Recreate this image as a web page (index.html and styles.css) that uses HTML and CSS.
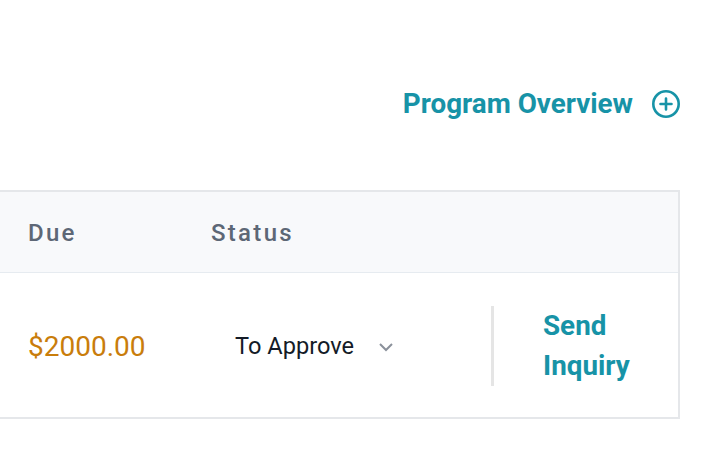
FILE: index.html
```html
<!DOCTYPE html>
<html lang="en">
<head>
<meta charset="utf-8">
<link rel="stylesheet" href="styles.css">
</head>
<body>
<div class="page">
  <div class="top">
    <a class="overview" href="#">Program Overview
      <svg class="plus" width="30" height="30" viewBox="0 0 30 30" aria-hidden="true">
        <circle cx="15" cy="15" r="12.7" fill="none" stroke="currentColor" stroke-width="2.6"/>
        <path d="M15 9.5v11M9.5 15h11" stroke="currentColor" stroke-width="2.6" stroke-linecap="round"/>
      </svg>
    </a>
  </div>
  <div class="table">
    <div class="row head">
      <div class="cell c-due">Due</div>
      <div class="cell c-status">Status</div>
      <div class="cell c-act"></div>
    </div>
    <div class="row body">
      <div class="cell c-due amount">$2000.00</div>
      <div class="cell c-status">
        <div class="select">To Approve
          <svg class="chev" width="16" height="10" viewBox="0 0 16 10" aria-hidden="true"><path d="M2 2l6 6 6-6" fill="none" stroke="currentColor" stroke-width="2"/></svg>
        </div>
      </div>
      <div class="cell c-act">
        <span class="divider"></span>
        <a class="inquiry" href="#">Send<br>Inquiry</a>
      </div>
    </div>
  </div>
</div>
</body>
</html>
```
FILE: styles.css
```css
* { box-sizing: border-box; }
html, body { margin: 0; background: #fff; }
body { font-family: Roboto, "Noto Sans", sans-serif; }
.page { padding: 0 28px 0 0; width: 708px; }
.top { height: 190px; display: flex; justify-content: flex-end; align-items: flex-start; padding-top: 87px; }
.overview { display: flex; align-items: center; gap: 18px; color: #1793a7; font-weight: 700; font-size: 27.8px; text-decoration: none; line-height: 34px; }
.plus { display: block; margin-right: -1px; }
.table { margin-left: -2px; border: 2px solid #e5e7ea; }
.row { display: grid; grid-template-columns: 211px 280px 1fr; align-items: center; }
.head { height: 81px; background: #f8f9fb; border-bottom: 1px solid #e6ebf0; padding-top: 1px; }
.head .cell { color: #5d6776; font-size: 24px; font-weight: 500; letter-spacing: 2.3px; }
.body { height: 144px; padding-top: 2px; }
.c-due { padding-left: 28px; }
.amount { color: #c97d0b; font-size: 28px; }
.select { display: flex; align-items: center; padding-left: 24px; font-size: 23.6px; color: #141b27; }
.chev { color: #8b919b; margin-left: 24px; margin-top: 2px; }
.c-act { display: flex; align-items: center; height: 100%; }
.divider { width: 3px; height: 80px; background: #e5e5e5; }
.inquiry { margin-left: 49px; color: #1793a7; font-weight: 700; font-size: 27.8px; line-height: 40px; text-decoration: none; }
```
